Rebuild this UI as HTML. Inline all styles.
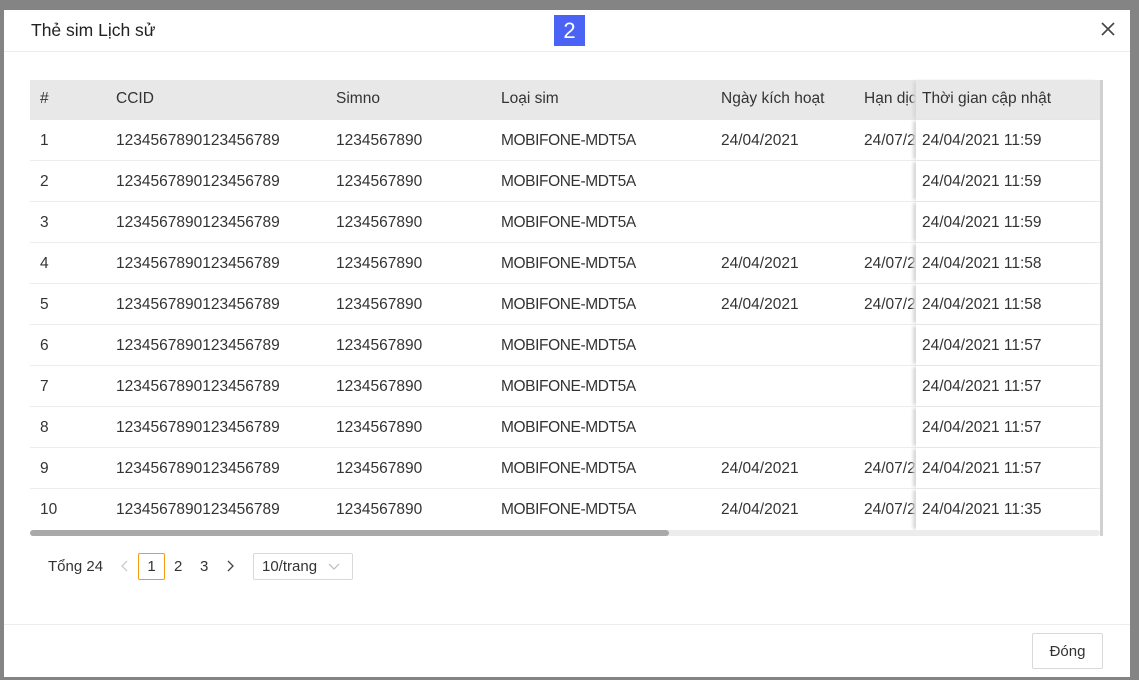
<!DOCTYPE html>
<html><head><meta charset="utf-8"><style>
*{box-sizing:border-box;margin:0;padding:0}
body{width:1139px;height:680px;background:#848484;font-family:"Liberation Sans",Arial,sans-serif;color:#333;position:relative;overflow:hidden;font-size:15.5px}
.modal{position:absolute;left:4px;top:10px;width:1126px;height:667px;background:#fff}
.hdr{position:absolute;left:0;top:0;width:100%;height:42px;border-bottom:1px solid #ececec}
.title{position:absolute;left:27px;top:10px;font-size:17.5px;color:#222}
.badge{position:absolute;left:550px;top:5px;width:31px;height:31px;background:#4b63f5;color:#fff;font-size:22px;text-align:center;line-height:31px}
.close{position:absolute;left:1097px;top:12px}
.tbl{position:absolute;left:26px;top:70px;width:1073px}
.row{position:absolute;left:0;width:1070px;height:41px;border-bottom:1px solid #ececec}
.row span{position:absolute;top:12px;white-space:nowrap}
.head{background:#e8e8e8;border-bottom:none;height:40px}
.head span{top:10px}
.c0{left:10px}.c1{left:86px}.c2{left:306px}.c3{left:471px;letter-spacing:-0.4px}.c4{left:691px}.c5{left:834px;width:52px;overflow:hidden}
.fix{position:absolute;left:886px;width:184px;top:0;height:100%;background:inherit;box-shadow:-4px 0 3px -1px #d8d8d8}
.row .fix span{left:6px}
.head .fix{background:#e8e8e8}
.vs{position:absolute;left:1070px;top:0;width:3px;height:456px;background:#d0d0d0}
.sb{position:absolute;left:26px;top:520px;width:1070px;height:6px;background:#ececec;border-radius:3px}
.sb div{width:639px;height:6px;background:#a9a9a9;border-radius:3px}
.pg{position:absolute;top:547px;font-size:15px}
.foot{position:absolute;left:0;top:614px;width:100%;border-top:1px solid #ececec}
.btn{position:absolute;left:1028px;top:623px;width:71px;height:36px;border:1px solid #d9d9d9;border-radius:2px;text-align:center;line-height:35px;font-size:15px}
</style></head><body>
<div class="modal">
<div class="hdr"><div class="title">Thẻ sim Lịch sử</div><div class="badge">2</div>
<svg class="close" width="14" height="14" viewBox="0 0 14 14"><path d="M1 1L13 13M13 1L1 13" stroke="#444" stroke-width="1.6"/></svg></div>
<div class="tbl">
<div class="row head" style="top:0"><span class="c0">#</span><span class="c1">CCID</span><span class="c2">Simno</span><span class="c3" style="letter-spacing:0">Loại sim</span><span class="c4">Ngày kích hoạt</span><span class="c5">Hạn dịch</span><div class="fix"><span>Thời gian cập nhật</span></div></div>
<div class="row" style="top:40px;background:#fff"><span class="c0">1</span><span class="c1">1234567890123456789</span><span class="c2">1234567890</span><span class="c3">MOBIFONE-MDT5A</span><span class="c4">24/04/2021</span><span class="c5">24/07/2021</span><div class="fix"><span>24/04/2021 11:59</span></div></div>
<div class="row" style="top:81px;background:#fff"><span class="c0">2</span><span class="c1">1234567890123456789</span><span class="c2">1234567890</span><span class="c3">MOBIFONE-MDT5A</span><div class="fix"><span>24/04/2021 11:59</span></div></div>
<div class="row" style="top:122px;background:#fff"><span class="c0">3</span><span class="c1">1234567890123456789</span><span class="c2">1234567890</span><span class="c3">MOBIFONE-MDT5A</span><div class="fix"><span>24/04/2021 11:59</span></div></div>
<div class="row" style="top:163px;background:#fff"><span class="c0">4</span><span class="c1">1234567890123456789</span><span class="c2">1234567890</span><span class="c3">MOBIFONE-MDT5A</span><span class="c4">24/04/2021</span><span class="c5">24/07/2021</span><div class="fix"><span>24/04/2021 11:58</span></div></div>
<div class="row" style="top:204px;background:#fff"><span class="c0">5</span><span class="c1">1234567890123456789</span><span class="c2">1234567890</span><span class="c3">MOBIFONE-MDT5A</span><span class="c4">24/04/2021</span><span class="c5">24/07/2021</span><div class="fix"><span>24/04/2021 11:58</span></div></div>
<div class="row" style="top:245px;background:#fff"><span class="c0">6</span><span class="c1">1234567890123456789</span><span class="c2">1234567890</span><span class="c3">MOBIFONE-MDT5A</span><div class="fix"><span>24/04/2021 11:57</span></div></div>
<div class="row" style="top:286px;background:#fff"><span class="c0">7</span><span class="c1">1234567890123456789</span><span class="c2">1234567890</span><span class="c3">MOBIFONE-MDT5A</span><div class="fix"><span>24/04/2021 11:57</span></div></div>
<div class="row" style="top:327px;background:#fff"><span class="c0">8</span><span class="c1">1234567890123456789</span><span class="c2">1234567890</span><span class="c3">MOBIFONE-MDT5A</span><div class="fix"><span>24/04/2021 11:57</span></div></div>
<div class="row" style="top:368px;background:#fff"><span class="c0">9</span><span class="c1">1234567890123456789</span><span class="c2">1234567890</span><span class="c3">MOBIFONE-MDT5A</span><span class="c4">24/04/2021</span><span class="c5">24/07/2021</span><div class="fix"><span>24/04/2021 11:57</span></div></div>
<div class="row" style="top:409px;background:#fff;border-bottom:none"><span class="c0">10</span><span class="c1">1234567890123456789</span><span class="c2">1234567890</span><span class="c3">MOBIFONE-MDT5A</span><span class="c4">24/04/2021</span><span class="c5">24/07/2021</span><div class="fix"><span>24/04/2021 11:35</span></div></div>
<div class="vs"></div>
</div>
<div class="sb"><div></div></div>
<div class="pg" style="left:44px;top:548px">Tổng 24</div>
<svg style="position:absolute;left:116px;top:550px" width="10" height="12" viewBox="0 0 10 12"><path d="M7 1L2 6L7 11" stroke="#ccc" stroke-width="1.3" fill="none"/></svg>
<div style="position:absolute;left:134px;top:543px;width:27px;height:27px;border:1px solid #f39c12;border-radius:2px;text-align:center;line-height:26px;font-size:15px">1</div>
<div class="pg" style="left:170px;top:548px">2</div>
<div class="pg" style="left:196px;top:548px">3</div>
<svg style="position:absolute;left:221px;top:550px" width="10" height="12" viewBox="0 0 10 12"><path d="M3 1L8 6L3 11" stroke="#444" stroke-width="1.3" fill="none"/></svg>
<div style="position:absolute;left:249px;top:543px;width:100px;height:27px;border:1px solid #d9d9d9;border-radius:2px;padding-left:8px;line-height:25px;font-size:15px">10/trang
<svg style="position:absolute;left:74px;top:9px" width="12" height="8" viewBox="0 0 12 8"><path d="M1 1L6 6L11 1" stroke="#bbb" stroke-width="1.2" fill="none"/></svg></div>
<div class="foot"></div>
<div class="btn">Đóng</div>
</div>
</body></html>
